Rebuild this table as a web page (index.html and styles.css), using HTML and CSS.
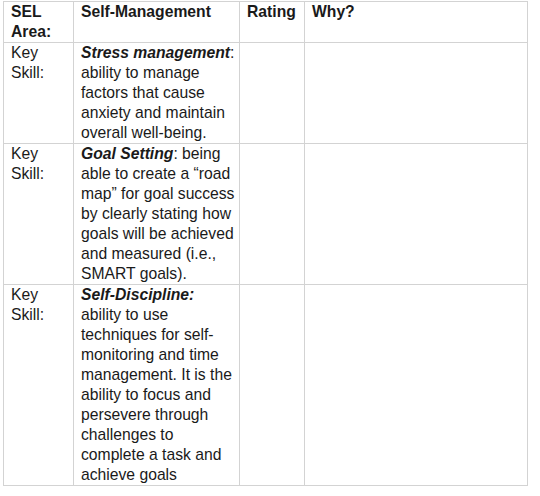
FILE: index.html
```html
<!DOCTYPE html>
<html>
<head>
<meta charset="utf-8">
<link rel="stylesheet" href="styles.css">
</head>
<body>
<table class="sel">
  <colgroup>
    <col class="c1"><col class="c2"><col class="c3"><col class="c4">
  </colgroup>
  <tr class="head">
    <th>SEL Area:</th>
    <th>Self-Management</th>
    <th>Rating</th>
    <th>Why?</th>
  </tr>
  <tr>
    <td>Key Skill:</td>
    <td><b><i>Stress management</i></b>: ability to manage factors that cause anxiety and maintain overall well-being.</td>
    <td></td>
    <td></td>
  </tr>
  <tr>
    <td>Key Skill:</td>
    <td><b><i>Goal Setting</i></b>: being able to create a “road map” for goal success by clearly stating how goals will be achieved and measured (i.e., SMART goals).</td>
    <td></td>
    <td></td>
  </tr>
  <tr>
    <td>Key Skill:</td>
    <td><b><i>Self-Discipline:</i></b> ability to use techniques for self-monitoring and time management. It is the ability to focus and persevere through challenges to complete a task and achieve goals</td>
    <td></td>
    <td></td>
  </tr>
</table>
</body>
</html>
```
FILE: styles.css
```css
html, body {
  margin: 0;
  padding: 0;
  background: #fff;
}
body {
  padding: 1px 0 0 3px;
  font-family: "Liberation Sans", Arial, sans-serif;
  font-size: 15.7px;
  line-height: 20px;
  color: #1a1a1a;
}
.sel {
  border-collapse: collapse;
  table-layout: fixed;
  width: 524px;
}
.c1 { width: 70px; }
.c2 { width: 166px; }
.c3 { width: 65px; }
.c4 { width: 223px; }
.sel th, .sel td {
  border: 1px solid #d3d3d3;
  padding: 0 2px 0 7px;
  vertical-align: top;
  text-align: left;
}
.sel th {
  font-weight: bold;
}
```
